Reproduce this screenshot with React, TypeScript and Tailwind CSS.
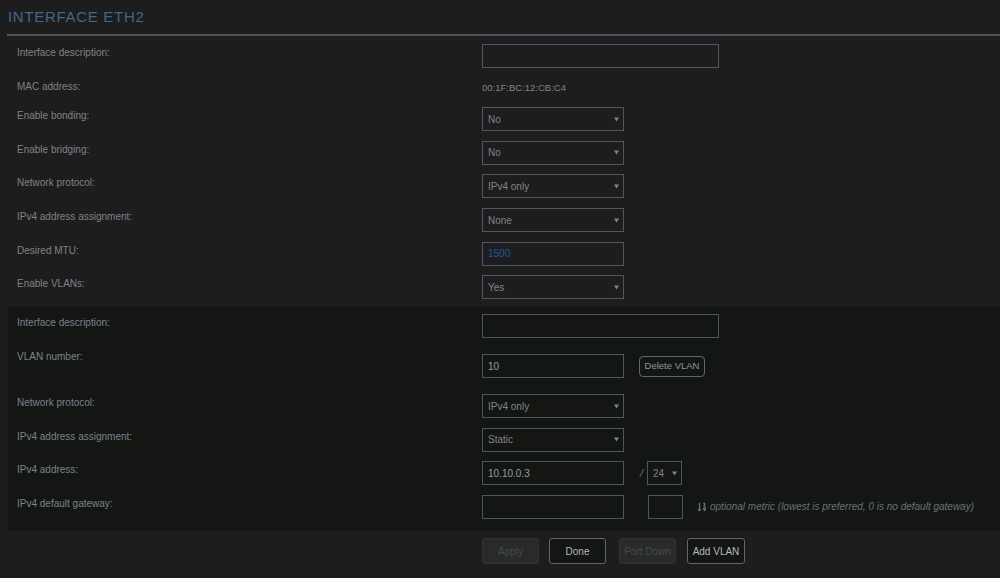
import React from 'react';
import { FaSortNumericDown } from 'react-icons/fa';

const Label: React.FC<{ children: React.ReactNode }> = ({ children }) => (
  <div className="w-[474px] shrink-0 pl-[9px] pt-[3px] text-[10px] leading-[12px] text-[#7c838c]">{children}</div>
);

const Row: React.FC<{ label: string; children?: React.ReactNode }> = ({ label, children }) => (
  <div className="flex h-[33.6px] items-start pt-[4px]">
    <Label>{label}</Label>
    <div className="flex items-center">{children}</div>
  </div>
);

const Arrow = () => (
  <svg width="5" height="5" viewBox="0 0 5 5" className="shrink-0">
    <path d="M0 0.5 L5 0.5 L2.5 4.5 Z" fill="#7f858d" />
  </svg>
);

const Select: React.FC<{ value: string; w?: string }> = ({ value, w = 'w-[142px]' }) => (
  <div className={`flex h-[24px] ${w} items-center justify-between border border-[#4e5661] pl-[5px] pr-[4px] text-[10px] text-[#7f858d]`}>
    <span>{value}</span>
    <Arrow />
  </div>
);

const Input: React.FC<{ value?: string; w?: string; color?: string }> = ({ value, w = 'w-[142px]', color = 'text-[#979da4]' }) => (
  <div className={`flex h-[24px] ${w} items-center border border-[#4e5661] pl-[5px] text-[10px] ${color}`}>{value}</div>
);

export default function App() {
  return (
    <div className="min-h-[578px] w-[1000px] overflow-hidden bg-[#1c1d1c] font-['Liberation_Sans',Arial,sans-serif]">
      <h1 className="pl-[8px] pt-[7px] text-[15px] leading-[20px] tracking-[0.7px] text-[#46658a]">INTERFACE ETH2</h1>
      <div className="ml-[7px] mt-[7px] h-[2px] bg-[#4a525e]" />

      <div className="pl-[8px] pt-[4px]">
        <Row label="Interface description:">
          <Input w="w-[237px]" />
        </Row>
        <div className="flex h-[29.7px] items-center">
          <div className="w-[474px] shrink-0 pl-[9px] pb-[3px] text-[10px] leading-[12px] text-[#7c838c]">MAC address:</div>
          <div className="pb-[1px] text-[9.5px] text-[#7f858d]">00:1F:BC:12:CB:C4</div>
        </div>
        <Row label="Enable bonding:">
          <Select value="No" />
        </Row>
        <Row label="Enable bridging:">
          <Select value="No" />
        </Row>
        <Row label="Network protocol:">
          <Select value="IPv4 only" />
        </Row>
        <Row label="IPv4 address assignment:">
          <Select value="None" />
        </Row>
        <Row label="Desired MTU:">
          <Input value="1500" color="text-[#1f5a9e]" />
        </Row>
        <Row label="Enable VLANs:">
          <Select value="Yes" />
        </Row>

        <div className="mt-[2px] bg-[#141614] pb-[5.3px] pt-[3.3px]">
          <Row label="Interface description:">
            <Input w="w-[237px]" />
          </Row>
          <div className="flex h-[46.3px] items-start pt-[4px]">
            <Label>VLAN number:</Label>
            <div className="mt-[6.3px] flex items-center">
              <Input value="10" />
              <button className="ml-[15px] h-[21px] w-[66px] rounded-[4px] border border-[#5e6672] text-[9.5px] text-[#9197a0]">
                Delete VLAN
              </button>
            </div>
          </div>
          <Row label="Network protocol:">
            <Select value="IPv4 only" />
          </Row>
          <Row label="IPv4 address assignment:">
            <Select value="Static" />
          </Row>
          <Row label="IPv4 address:">
            <Input value="10.10.0.3" />
            <span className="ml-[16px] mr-[4px] text-[11px] italic text-[#6a717a]">/</span>
            <Select value="24" w="w-[35px]" />
          </Row>
          <Row label="IPv4 default gateway:">
            <Input />
            <div className="ml-[24px] h-[24px] w-[35px] border border-[#4e5661]" />
            <FaSortNumericDown className="ml-[14px] text-[10px] text-[#6a717a]" />
            <span className="ml-[3px] text-[10px] italic text-[#6a717a]">
              optional metric (lowest is preferred, 0 is no default gateway)
            </span>
          </Row>
        </div>

        <div className="mt-[8.3px] flex gap-[10px] pl-[474px] text-[10px]">
          <button className="h-[26px] w-[57px] rounded-[3px] border border-[#313333] bg-[#292a2a] text-[#474b4f]">Apply</button>
          <button className="h-[26px] w-[57px] rounded-[3px] border border-[#5e6672] bg-[#141614] text-[#b4b9be]">Done</button>
          <button className="ml-[3px] h-[26px] w-[57px] rounded-[3px] border border-[#313333] bg-[#292a2a] text-[#474b4f]">Port Down</button>
          <button className="ml-[1px] h-[26px] w-[58px] rounded-[3px] border border-[#5e6672] bg-[#141614] text-[#b4b9be]">Add VLAN</button>
        </div>
      </div>
    </div>
  );
}
